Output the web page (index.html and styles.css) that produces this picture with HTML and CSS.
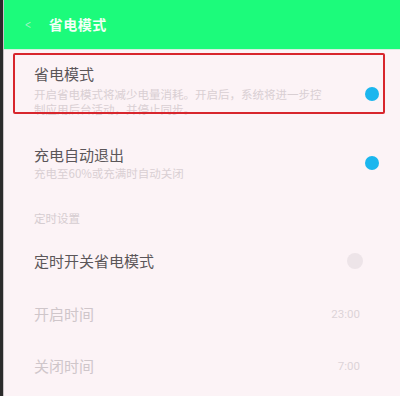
FILE: index.html
```html
<!DOCTYPE html>
<html lang="zh-CN">
<head>
<meta charset="utf-8">
<title>省电模式</title>
<link rel="stylesheet" href="styles.css">
</head>
<body>
<div class="screen">
  <header class="topbar">
    <span class="back">&lt;</span>
    <span class="title">省电模式</span>
  </header>
  <main class="main">
    <div class="row row-first">
      <div class="text">
        <div class="label">省电模式</div>
        <div class="desc wrap">开启省电模式将减少电量消耗。开启后，系统将进一步控制应用后台活动，并停止同步。</div>
      </div>
      <span class="dot dot-on dot-first"></span>
    </div>
    <div class="row row-second">
      <div class="text">
        <div class="label">充电自动退出</div>
        <div class="desc">充电至60%或充满时自动关闭</div>
      </div>
      <span class="dot dot-on"></span>
    </div>
    <div class="section">定时设置</div>
    <div class="row row-third">
      <div class="label">定时开关省电模式</div>
      <span class="dot dot-off"></span>
    </div>
    <div class="row row-fourth">
      <div class="label muted">开启时间</div>
      <span class="time">23:00</span>
    </div>
    <div class="row row-fifth">
      <div class="label muted">关闭时间</div>
      <span class="time">7:00</span>
    </div>
    <div class="highlight"></div>
  </main>
</div>
</body>
</html>
```
FILE: styles.css
```css
html, body {
  margin: 0;
  padding: 0;
  background: #2b2b2b;
}
body {
  width: 400px;
  height: 396px;
  overflow: hidden;
  font-family: "Noto Sans CJK SC", "Noto Sans", sans-serif;
}
.screen {
  margin-left: 3px;
  height: 396px;
  background: #fcf3f6;
  border-left: 1px solid #c9c3c6;
  box-sizing: border-box;
}
.topbar {
  height: 50px;
  background: #1cfb7b;
  display: flex;
  align-items: center;
  padding-left: 20px;
  box-sizing: border-box;
  border-bottom: 1px solid #d6efe0;
}
.back {
  color: #a6f7c6;
  font-size: 14px;
  line-height: 16px;
  margin-top: -2px;
  transform: scaleX(0.7);
}
.title {
  color: #f2fff6;
  font-size: 14px;
  font-weight: 700;
  margin-left: 17px;
  margin-top: -2px;
  letter-spacing: 0.5px;
}
.main {
  position: relative;
  display: flex;
  flex-direction: column;
  padding: 0 21px 0 30px;
}
.highlight {
  position: absolute;
  top: 3px;
  left: 9px;
  width: 372px;
  height: 61px;
  border: 2px solid #d8262d;
  border-radius: 2px;
  box-sizing: border-box;
}
.row {
  display: flex;
  align-items: center;
  justify-content: space-between;
}
.row-first { padding-top: 14px; }
.row-second { margin-top: 28px; }
.row-third { margin-top: 25px; }
.row-fourth { margin-top: 33px; }
.row-fifth { margin-top: 32px; }
.label {
  font-size: 15px;
  line-height: 20px;
  color: #5b5659;
}
.label.muted {
  color: #cfc6ca;
}
.desc {
  font-size: 11.5px;
  line-height: 15px;
  color: #d9cfd3;
  margin-top: 1px;
}
.wrap {
  width: 290px;
  margin-top: 3px;
}
.section {
  margin-top: 30px;
  font-size: 11.5px;
  line-height: 15px;
  color: #d6cdd1;
}
.dot {
  display: block;
  border-radius: 50%;
  flex-shrink: 0;
}
.dot-on {
  width: 14px;
  height: 14px;
  background: #1bb6ee;
}
.dot-first {
  margin-top: 6px;
}
.dot-off {
  width: 16px;
  height: 16px;
  background: #ede4e8;
  margin-right: 16px;
}
.time {
  font-family: Roboto, "Noto Sans", sans-serif;
  font-size: 11.5px;
  color: #ddd4d8;
  margin-right: 19px;
}
```
